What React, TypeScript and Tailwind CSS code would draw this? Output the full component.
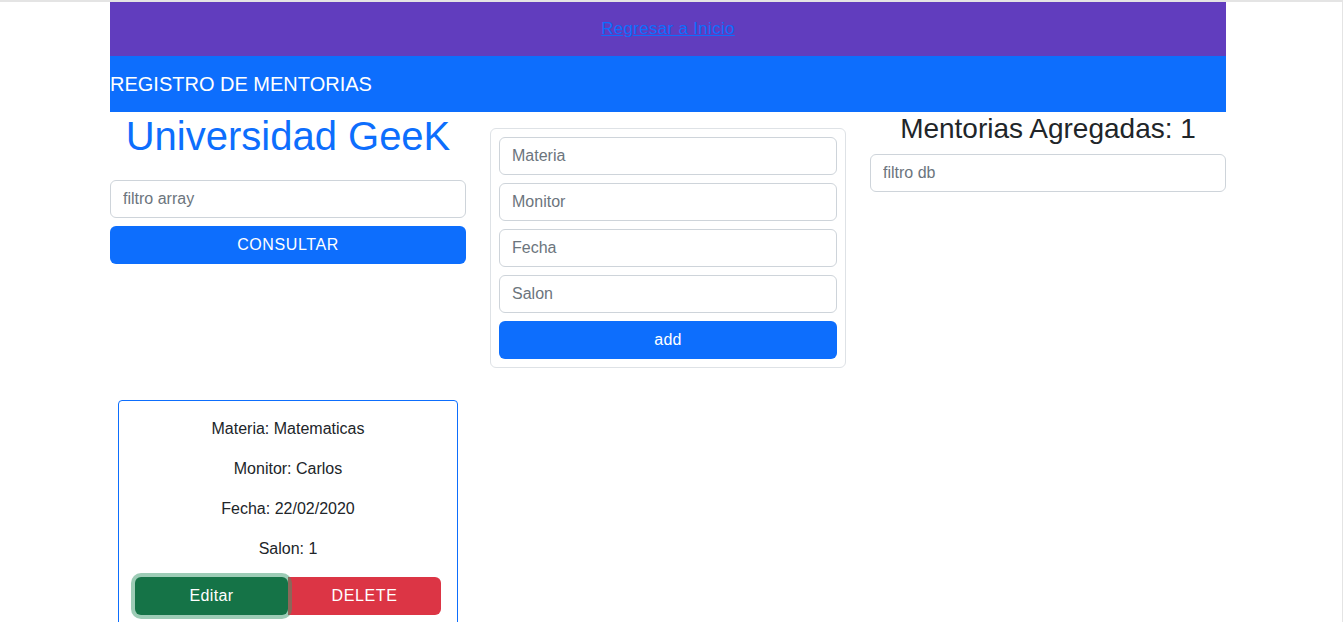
import React from "react";

const font = { fontFamily: '"Liberation Sans", Arial, sans-serif' };

function Field({ placeholder }: { placeholder: string }) {
  return (
    <input
      type="text"
      placeholder={placeholder}
      className="block w-full h-[38px] px-3 text-base text-[#212529] placeholder:text-[#6c757d] bg-white border border-[#ced4da] rounded-[6px] outline-none"
    />
  );
}

export default function App() {
  const mentoria = {
    materia: "Matematicas",
    monitor: "Carlos",
    fecha: "22/02/2020",
    salon: "1",
  };

  return (
    <div
      className="min-h-screen w-full bg-white border-t-2 border-r border-[#e4e4e4] text-[#212529]"
      style={font}
    >
      <div className="ml-[110px] w-[1116px]">
        <nav className="h-[54px] bg-[#613dbe] flex items-center justify-center">
          <a href="#" className="text-[#0d6efd] underline text-[17px] tracking-[0.3px]">
            Regresar a Inicio
          </a>
        </nav>
        <header className="h-[56px] bg-[#0d6efd] flex items-center">
          <span className="text-white text-[20px]">REGISTRO DE MENTORIAS</span>
        </header>

        <div className="grid grid-cols-3 gap-x-6">
          <div>
            <h1 className="text-[40px] leading-[48px] text-[#0d6efd] text-center mb-5">
              Universidad GeeK
            </h1>
            <Field placeholder="filtro array" />
            <button className="mt-2 w-full h-[38px] rounded-[6px] bg-[#0d6efd] text-white text-base tracking-[0.6px]">
              CONSULTAR
            </button>
          </div>

          <form className="mt-4 border border-[#dee2e6] rounded-[6px] p-2 flex flex-col gap-2 self-start">
            <Field placeholder="Materia" />
            <Field placeholder="Monitor" />
            <Field placeholder="Fecha" />
            <Field placeholder="Salon" />
            <button
              type="button"
              className="w-full h-[38px] rounded-[6px] bg-[#0d6efd] text-white text-base tracking-[0.3px]"
            >
              add
            </button>
          </form>

          <div>
            <h3 className="text-[28px] leading-[34px] text-center mb-2">
              Mentorias Agregadas: 1
            </h3>
            <Field placeholder="filtro db" />
          </div>
        </div>

        <div className="mt-[32px] ml-2 w-[340px] border border-[#0d6efd] rounded-[4px] px-4 pt-4 pb-4 text-center text-base leading-6">
          <p className="mb-4">Materia: {mentoria.materia}</p>
          <p className="mb-4">Monitor: {mentoria.monitor}</p>
          <p className="mb-4">Fecha: {mentoria.fecha}</p>
          <p className="mb-4">Salon: {mentoria.salon}</p>
          <div className="flex">
            <button className="relative z-10 flex-1 h-[38px] rounded-[6px] bg-[#157347] text-white ring-4 ring-[#3c996e]/50 tracking-[0.4px]">
              Editar
            </button>
            <button className="flex-1 h-[38px] rounded-r-[6px] bg-[#dc3545] text-white tracking-[0.6px]">
              DELETE
            </button>
          </div>
        </div>
      </div>
    </div>
  );
}
